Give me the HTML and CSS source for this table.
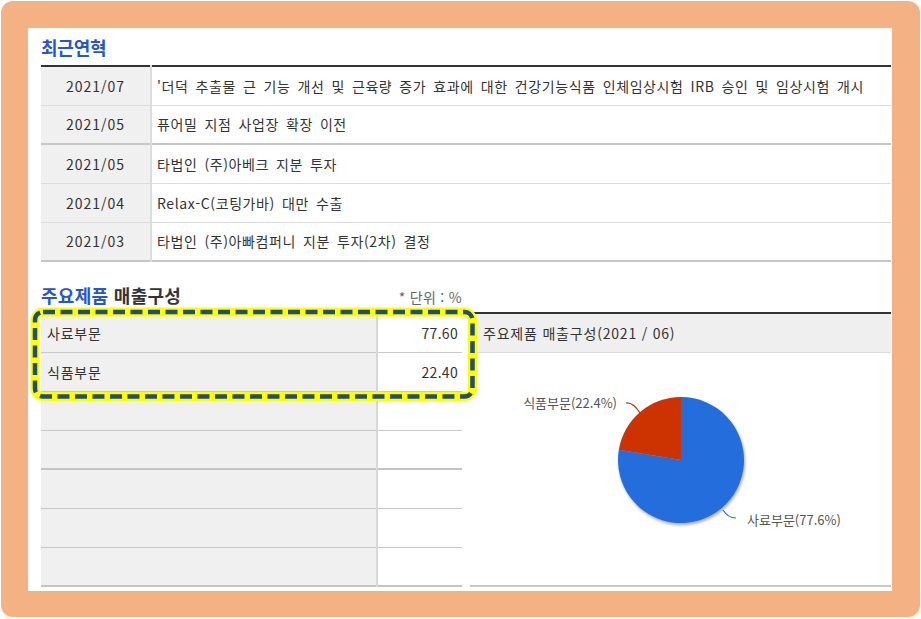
FILE: index.html
```html
<!DOCTYPE html>
<html lang="ko">
<head>
    <meta charset="UTF-8">
    <title>기업정보 - 최근연혁</title>
    <link rel="stylesheet" href="styles.css">
</head>
<body>
    <div class="frame">
        <div class="panel">
            <h2 class="title">최근연혁</h2>
            <table class="history">
                <tr><td class="date">2021/07</td><td class="event">'더덕 추출물 근 기능 개선 및 근육량 증가 효과에 대한 건강기능식품 인체임상시험 IRB 승인 및 임상시험 개시</td></tr>
                <tr class="group-end"><td class="date">2021/05</td><td class="event">퓨어밀 지점 사업장 확장 이전</td></tr>
                <tr><td class="date">2021/05</td><td class="event">타법인 (주)아베크 지분 투자</td></tr>
                <tr><td class="date">2021/04</td><td class="event">Relax-C(코팅가바) 대만 수출</td></tr>
                <tr class="last"><td class="date">2021/03</td><td class="event">타법인 (주)아빠컴퍼니 지분 투자(2차) 결정</td></tr>
            </table>

            <div class="sales">
                <div class="sales-head">
                    <h2 class="title"><span class="blue">주요제품</span> 매출구성</h2>
                    <span class="unit">* 단위 : %</span>
                </div>
                <div class="sales-left">
                    <table class="sales-table">
                        <tr><td class="name">사료부문</td><td class="value">77.60</td></tr>
                        <tr><td class="name">식품부문</td><td class="value">22.40</td></tr>
                        <tr><td class="name"></td><td class="value"></td></tr>
                        <tr class="group-end"><td class="name"></td><td class="value"></td></tr>
                        <tr><td class="name"></td><td class="value"></td></tr>
                        <tr><td class="name"></td><td class="value"></td></tr>
                        <tr class="last"><td class="name"></td><td class="value"></td></tr>
                    </table>
                    <!-- highlight box drawn over the first two rows -->
                    <svg class="highlight" width="446" height="94" viewBox="0 0 446 94">
                        <rect class="hl-glow" x="4" y="5" width="437.5" height="84.5" rx="8" ry="8"/>
                        <rect class="hl-dash" x="4" y="5" width="437.5" height="84.5" rx="8" ry="8"/>
                    </svg>
                </div>
                <div class="chart">
                    <div class="chart-head">주요제품 매출구성(2021 / 06)</div>
                    <div class="chart-body">
                        <svg width="421" height="232" viewBox="0 0 421 232">
                            <g class="pie">
                                <path class="slice-food" d="M211 107 L211 44 A63 63 0 0 0 148.84 96.75 Z"/>
                                <path class="slice-feed" d="M211 107 L148.84 96.75 A63 63 0 1 0 211 44 Z"/>
                            </g>
                            <path class="lead-food" d="M156 50 Q163 49 170 60"/>
                            <path class="lead-feed" d="M253 157 Q258 165 266 165"/>
                            <text class="pie-label" x="147" y="55" text-anchor="end">식품부문(22.4%)</text>
                            <text class="pie-label" x="277" y="172">사료부문(77.6%)</text>
                        </svg>
                    </div>
                </div>
            </div>
        </div>
    </div>
</body>
</html>
```
FILE: styles.css
```css
html, body {
    margin: 0;
    padding: 0;
    background-color: #ffffff;
}
body {
    font-family: "Noto Sans CJK KR", "Noto Sans", sans-serif;
    color: #333;
}
.frame {
    margin: 1px;
    width: 919px;
    height: 616px;
    box-sizing: border-box;
    padding: 27px 28px 26px 27px;
    background-color: #f4b183;
    border-radius: 12px;
}
.panel {
    height: 563px;
    background-color: #ffffff;
    padding: 0 1px 0 13px;
    overflow: hidden;
}
.title {
    margin: 0;
    padding-top: 6px;
    margin-bottom: 5px;
    font-size: 18px;
    line-height: 26px;
    font-weight: bold;
    color: #2355d6;
    letter-spacing: -0.2px;
}
.title .blue {
    color: #2355d6;
}
.sales .title {
    color: #333;
}
table {
    width: 100%;
    border-collapse: collapse;
    font-size: 14px;
}
td {
    padding: 0;
}
.history {
    border-top: 2px solid #333;
}
.history tr {
    height: 39px;
    border-bottom: 1px solid #dcdcdc;
}
.history tr.group-end,
.history tr.last {
    border-bottom: 2px solid #c6c6c6;
}
.history .date {
    width: 109px;
    background-color: #f0f0f0;
    border-right: 2px solid #dcdcdc;
    text-align: center;
    color: #333;
    letter-spacing: 1px;
}
.history .event {
    padding-left: 5px;
    color: #333;
    letter-spacing: 0.6px;
    word-spacing: 2.5px;
    white-space: nowrap;
}
.sales {
    display: grid;
    grid-template-columns: 421px 421px;
    column-gap: 8px;
    margin-top: 20px;
}
.sales-head {
    grid-column: 1;
    display: flex;
    justify-content: space-between;
    align-items: flex-end;
    margin-bottom: 4px;
}
.sales-head .title {
    padding-top: 0;
    margin-bottom: 0;
    letter-spacing: 0.3px;
}
.unit {
    font-size: 14px;
    line-height: 20px;
    color: #666;
    padding-bottom: 1px;
    letter-spacing: 0.3px;
}
.sales-left {
    grid-column: 1;
    position: relative;
}
.sales-table {
    border-top: 2px solid #333;
}
.sales-table tr {
    height: 39px;
    border-bottom: 1px solid #c8c8c8;
}
.sales-table tr.group-end,
.sales-table tr.last {
    border-bottom: 2px solid #c4c4c4;
}
.sales-table .name {
    background-color: #f0f0f0;
    border-right: 2px solid #d8d8d8;
    padding-left: 6px;
    color: #333;
    letter-spacing: 0.8px;
}
.sales-table .value {
    width: 80px;
    text-align: right;
    padding-right: 4px;
    color: #333;
    letter-spacing: 0.3px;
}
.highlight {
    position: absolute;
    left: -10px;
    top: -5px;
    overflow: visible;
}
.hl-glow {
    fill: none;
    stroke: #ffff00;
    stroke-width: 9;
}
.hl-dash {
    fill: none;
    stroke: #1f4e79;
    stroke-width: 4.5;
    stroke-dasharray: 12 5.5;
}
.chart {
    grid-column: 2;
    border-top: 2px solid #333;
    border-bottom: 2px solid #c8c8c8;
}
.chart-head {
    height: 38px;
    line-height: 38px;
    background-color: #efefef;
    border-bottom: 1px solid #dcdcdc;
    padding-left: 13px;
    font-size: 14px;
    color: #333;
    letter-spacing: 0.8px;
}
.chart-body {
    height: 232px;
}
.chart-body svg {
    display: block;
}
.pie {
    filter: drop-shadow(1px 2px 1.5px rgba(0, 0, 0, 0.35));
}
.slice-feed {
    fill: #236ddd;
}
.slice-food {
    fill: #cc3300;
}
.lead-food {
    fill: none;
    stroke: #cc3300;
    stroke-width: 1.2;
}
.lead-feed {
    fill: none;
    stroke: #236ddd;
    stroke-width: 1.2;
}
.pie-label {
    font-size: 13px;
    fill: #555;
    font-family: "Noto Sans CJK KR", "Noto Sans", sans-serif;
}
```
